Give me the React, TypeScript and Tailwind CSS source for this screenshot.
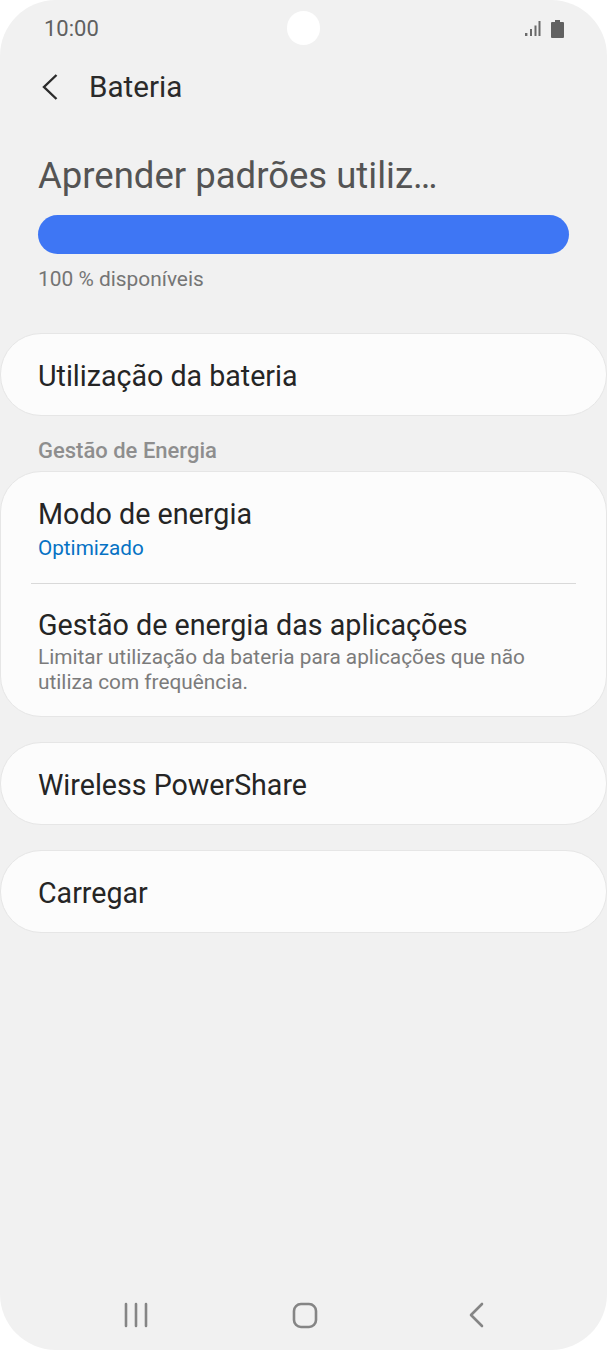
const font = { fontFamily: 'Roboto, sans-serif' };

function Row({ title }: { title: string }) {
  return (
    <div className="flex h-[83px] items-center rounded-[41px] border border-[#e6e6e6] bg-[#fcfcfc] px-[37px] pt-[2px] text-[28.6px] leading-[34px] text-[#252525]">
      {title}
    </div>
  );
}

export default function App() {
  return (
    <div className="h-[1350px] w-[607px] bg-white" style={font}>
      <div className="relative flex h-full flex-col rounded-[56px] bg-[#f1f1f1]">
        <div className="absolute left-[287px] top-[11px] h-[34px] w-[33px] rounded-full bg-white" />

        <div className="flex h-[56px] items-center justify-between pl-[44px] pr-[43px] pt-[1px]">
          <span className="text-[22px] leading-[28px] text-[#606060]">10:00</span>
          <div className="flex items-end gap-[10px]">
            <svg width="16" height="18" viewBox="0 0 16 18" fill="#6a6a6a">
              <rect x="0" y="13" width="2.4" height="3" />
              <rect x="5" y="9" width="2" height="7" />
              <rect x="9.5" y="5.5" width="2" height="10.5" />
              <rect x="13.5" y="1" width="2" height="15" />
            </svg>
            <svg width="13" height="18" viewBox="0 0 13 18" fill="#616161">
              <path d="M4 0h5v2h3a1 1 0 0 1 1 1v14a1 1 0 0 1-1 1H1a1 1 0 0 1-1-1V3a1 1 0 0 1 1-1h3z" />
            </svg>
          </div>
        </div>

        <div className="flex h-[62px] items-center pl-[41px]">
          <svg width="18" height="28" viewBox="0 0 18 28" fill="none" stroke="#2b2b2b" strokeWidth="2.4">
            <path d="M15.5 2 3 14l12.5 12" />
          </svg>
          <span className="ml-[30px] text-[29.6px] leading-[36px] text-[#2a2a2a]">Bateria</span>
        </div>

        <div className="mt-[36px] px-[38px] text-[36.5px] leading-[44px] text-[#545454]">Aprender padrões utiliz…</div>

        <div className="mx-[38px] mt-[17px] h-[39px] rounded-full bg-[#3e76f4]" />

        <div className="mt-[12px] px-[38px] text-[20.9px] leading-[26px] text-[#757575]">100 % disponíveis</div>

        <div className="mt-[41px]">
          <Row title="Utilização da bateria" />
        </div>

        <div className="mt-[22px] px-[38px] text-[22px] font-medium leading-[26px] text-[#8e8e8e]">Gestão de Energia</div>

        <div className="mt-[7px] rounded-[41px] border border-[#e6e6e6] bg-[#fcfcfc]">
          <div className="px-[37px] pb-[22px] pt-[25px]">
            <div className="text-[28.7px] leading-[34px] text-[#252525]">Modo de energia</div>
            <div className="mt-[4px] text-[20.7px] leading-[26px] text-[#0672c4]">Optimizado</div>
          </div>
          <div className="mx-[30px] h-px bg-[#d9d9d9]" />
          <div className="px-[37px] pb-[21px] pt-[24px]">
            <div className="text-[28.7px] leading-[34px] text-[#252525]">Gestão de energia das aplicações</div>
            <div className="mt-[3px] text-[20.8px] leading-[25px] text-[#7b7b7b]">
              Limitar utilização da bateria para aplicações que não utiliza com frequência.
            </div>
          </div>
        </div>

        <div className="mt-[25px]">
          <Row title="Wireless PowerShare" />
        </div>
        <div className="mt-[25px]">
          <Row title="Carregar" />
        </div>

        <div className="mt-auto flex h-[72px] items-start pl-[124px] pt-[24px]">
          <svg width="24" height="26" viewBox="0 0 24 26" fill="none" stroke="#858585" strokeWidth="2.6" strokeLinecap="round">
            <path d="M2 2v22M12 2v22M22 2v22" />
          </svg>
          <svg className="ml-[144px]" width="26" height="27" viewBox="0 0 26 27" fill="none" stroke="#858585" strokeWidth="2.6">
            <rect x="2" y="2" width="22" height="23" rx="7" />
          </svg>
          <svg className="ml-[150px]" width="16" height="26" viewBox="0 0 16 26" fill="none" stroke="#858585" strokeWidth="2.6" strokeLinecap="round" strokeLinejoin="round">
            <path d="M14 2 3 13l11 11" />
          </svg>
        </div>
      </div>
    </div>
  );
}
